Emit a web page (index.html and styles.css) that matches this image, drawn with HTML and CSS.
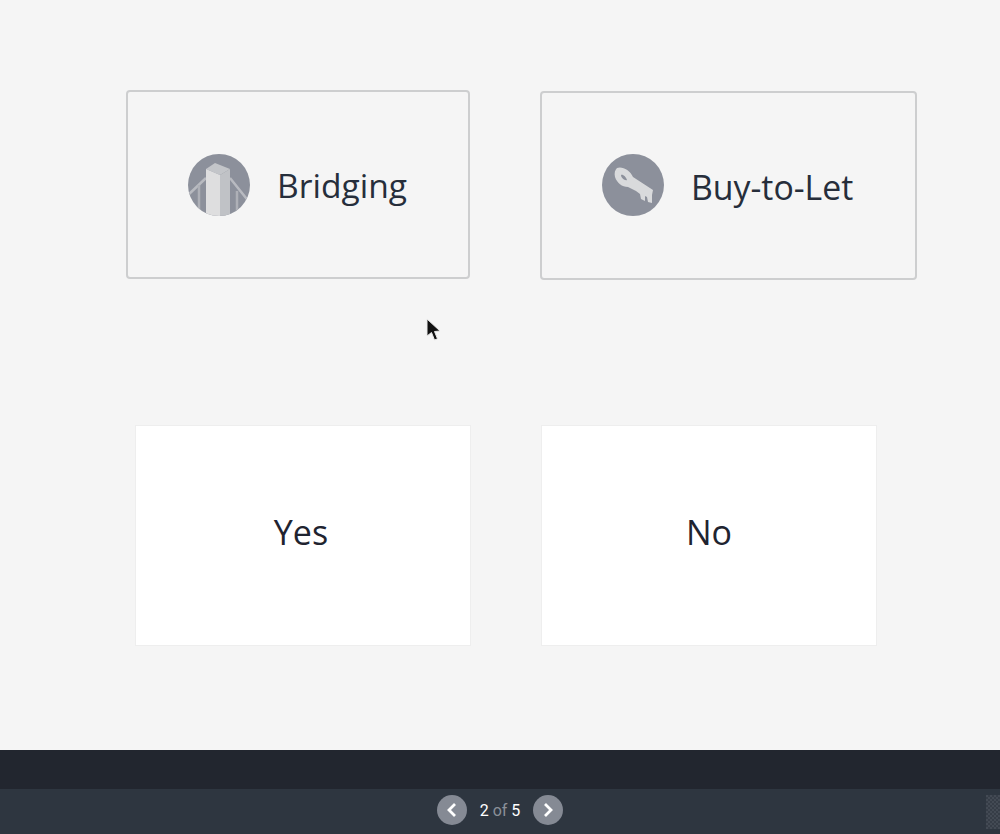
FILE: index.html
```html
<!DOCTYPE html>
<html lang="en">

<head>
    <meta charset="UTF-8">
    <meta name="viewport" content="width=device-width, initial-scale=1.0">
    <title>Loan type</title>
    <link rel="stylesheet" href="styles.css">
</head>

<body>
    <main class="content">
        <div class="row row-types">
            <button class="type-card type-bridging">
                <svg class="type-icon" width="62" height="62" viewBox="0 0 62 62">
                    <defs>
                        <clipPath id="disc">
                            <circle cx="31" cy="31" r="31"></circle>
                        </clipPath>
                    </defs>
                    <circle cx="31" cy="31" r="31" fill="#8c909b"></circle>
                    <g clip-path="url(#disc)">
                        <path d="M0 41 L18 24 M42 24 L62 49" stroke="#b8bac0" stroke-width="2.5" fill="none"></path>
                        <path d="M11 31 V62 M49 37 V62" stroke="#aeb0b7" stroke-width="2.5" fill="none"></path>
                        <polygon points="18,15 27,9 42,15 32,21" fill="#c3c5c9"></polygon>
                        <polygon points="18,15 32,21 32,62 18,62" fill="#dededf"></polygon>
                        <polygon points="32,21 42,15 42,62 32,62" fill="#c0c2c6"></polygon>
                    </g>
                </svg>
                <span class="type-label">Bridging</span>
            </button>
            <button class="type-card type-btl">
                <svg class="type-icon" width="62" height="62" viewBox="0 0 62 62">
                    <circle cx="31" cy="31" r="31" fill="#8c909b"></circle>
                    <path fill="#d9dadc" fill-rule="evenodd"
                        d="M15 14 C20 12 28 16 31 23 L51 36 L50 41 L50 49 L46 48 L45 43 L43 42 L43 47 L39 45 L38 40 L34 37 L26 33 C20 33 15 29 13 23 C12 19 13 16 15 14 Z M19 21 C21 20 24 23 25 26 C23 27 19 24 19 21 Z"></path>
                </svg>
                <span class="type-label">Buy-to-Let</span>
            </button>
        </div>

        <div class="row row-answers">
            <button class="answer-card answer-yes">Yes</button>
            <button class="answer-card answer-no">No</button>
        </div>

        <svg class="cursor" width="17" height="25" viewBox="0 0 17 25">
            <path d="M2 1 L2 18 L6.5 14.5 L9.5 22 L12.5 20.8 L9.5 13.5 L15 13 Z" fill="#111" stroke="#e8e8e8" stroke-width="1"></path>
        </svg>
    </main>

    <footer class="footer">
        <div class="footer-top"></div>
        <div class="pager">
            <button class="pager-btn">
                <svg width="14" height="16" viewBox="0 0 14 16" fill="none" stroke="#fff" stroke-width="2.8">
                    <polyline points="10,2 4,8 10,14"></polyline>
                </svg>
            </button>
            <div class="pager-text">2 <span class="pager-of">of</span> 5</div>
            <button class="pager-btn">
                <svg width="14" height="16" viewBox="0 0 14 16" fill="none" stroke="#fff" stroke-width="2.8">
                    <polyline points="4,2 10,8 4,14"></polyline>
                </svg>
            </button>
            <div class="pager-grip"></div>
        </div>
    </footer>
</body>

</html>
```

FILE: styles.css
```css
* {
    box-sizing: border-box;
}

body {
    margin: 0;
    height: 834px;
    overflow: hidden;
    display: flex;
    flex-direction: column;
    background-color: #f5f5f5;
    font-family: "Open Sans", Arial, sans-serif;
}

button {
    font-family: inherit;
    padding: 0;
}

.content {
    position: relative;
    height: 750px;
    padding-top: 90px;
}

.row {
    display: flex;
    align-items: flex-start;
}

.row-types {
    padding-left: 126px;
}

.row-answers {
    padding-left: 135px;
    margin-top: 145px;
}

.type-card {
    display: flex;
    align-items: center;
    height: 189px;
    background: transparent;
    border: 2px solid #cdcecf;
    border-radius: 4px;
    color: #262e3b;
}

.type-bridging {
    width: 344px;
    padding-left: 60px;
}

.type-bridging .type-label {
    margin-top: 0;
    font-size: 33.6px;
}

.type-btl {
    width: 377px;
    margin-left: 70px;
    margin-top: 1px;
    padding-left: 60px;
}

.type-btl .type-icon {
    margin-top: -2px;
}

.type-icon {
    flex: none;
}

.type-label {
    margin-left: 27px;
    margin-top: 2px;
    font-size: 33.8px;
}

.answer-card {
    width: 336px;
    height: 221px;
    padding-bottom: 8px;
    background-color: #fff;
    border: 1px solid #eeeeee;
    font-size: 34px;
    color: #1f2430;
}

.answer-yes {
    padding-right: 4px;
}

.answer-no {
    margin-left: 70px;
}

.cursor {
    position: absolute;
    left: 425px;
    top: 318px;
}

.footer {
    flex: 1;
    display: flex;
    flex-direction: column;
}

.footer-top {
    height: 39px;
    background-color: #22262f;
}

.pager {
    position: relative;
    flex: 1;
    display: flex;
    align-items: center;
    justify-content: center;
    gap: 13px;
    padding-bottom: 3px;
    background-color: #2e3640;
}

.pager-btn {
    display: flex;
    align-items: center;
    justify-content: center;
    width: 30px;
    height: 30px;
    border: none;
    border-radius: 50%;
    background-color: #858a94;
}

.pager-text {
    font-family: Roboto, Arial, sans-serif;
    font-size: 16px;
    color: #fff;
}

.pager-of {
    color: #8b9098;
}

.pager-grip {
    position: absolute;
    right: 0;
    top: 6px;
    width: 14px;
    height: 34px;
    background: repeating-conic-gradient(#363d47 0 25%, #434a54 0 50%) 0 0 / 4px 4px;
}
```
